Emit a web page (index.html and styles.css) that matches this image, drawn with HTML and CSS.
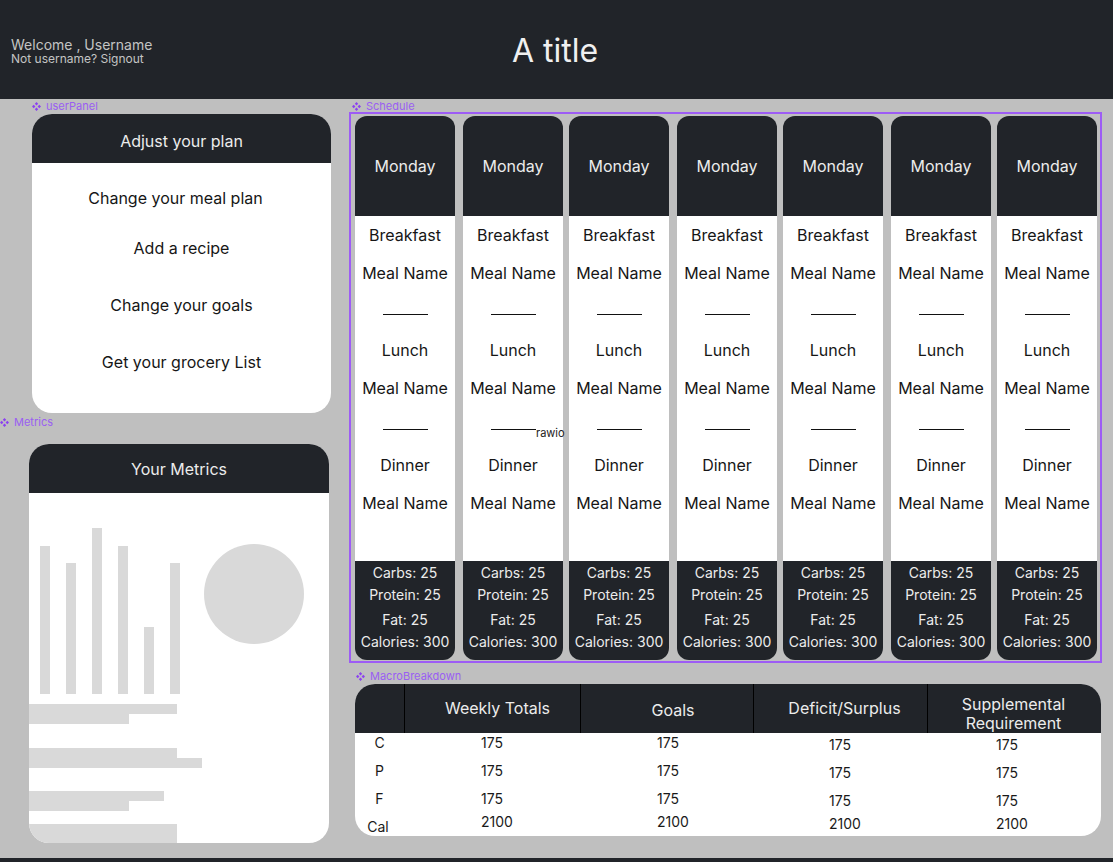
FILE: index.html
```html
<!DOCTYPE html>
<html lang="en">
<head>
<meta charset="utf-8">
<title>Meal planner</title>
<link rel="stylesheet" href="styles.css">
</head>
<body>
<header class="topbar">
  <div class="welcome">
    <div class="welcome-name">Welcome , Username</div>
    <div class="welcome-sub">Not username? Signout</div>
  </div>
  <h1 class="title">A title</h1>
  <div></div>
</header>

<main class="main">
  <section class="left">
    <div class="tag tag-user"><svg class="tag-icon" viewBox="0 0 9 9"><path d="M4.5 0L6.2 1.7L4.5 3.4L2.8 1.7Z M1.7 2.8L3.4 4.5L1.7 6.2L0 4.5Z M7.3 2.8L9 4.5L7.3 6.2L5.6 4.5Z M4.5 5.6L6.2 7.3L4.5 9L2.8 7.3Z"/></svg>userPanel</div>
    <div class="card panel">
      <div class="card-head card-head-panel">Adjust your plan</div>
      <div class="panel-body">
        <div class="panel-item panel-item-first">Change your meal plan</div>
        <div class="panel-item">Add a recipe</div>
        <div class="panel-item panel-item-gap">Change your goals</div>
        <div class="panel-item panel-item-gap">Get your grocery List</div>
      </div>
    </div>

    <div class="tag tag-metrics"><svg class="tag-icon" viewBox="0 0 9 9"><path d="M4.5 0L6.2 1.7L4.5 3.4L2.8 1.7Z M1.7 2.8L3.4 4.5L1.7 6.2L0 4.5Z M7.3 2.8L9 4.5L7.3 6.2L5.6 4.5Z M4.5 5.6L6.2 7.3L4.5 9L2.8 7.3Z"/></svg>Metrics</div>
    <div class="card metrics">
      <div class="card-head">Your Metrics</div>
      <div class="metrics-body">
        <div class="chart-row">
          <div class="vbars">
            <div class="vbar" style="height:148px"></div>
            <div class="vbar" style="height:131px"></div>
            <div class="vbar" style="height:166px"></div>
            <div class="vbar" style="height:148px"></div>
            <div class="vbar" style="height:67px"></div>
            <div class="vbar" style="height:131px"></div>
          </div>
          <div class="pie"></div>
        </div>
        <div class="hgroup hgroup-1">
          <div class="hbar" style="width:148px"></div>
          <div class="hbar" style="width:100px"></div>
        </div>
        <div class="hgroup hgroup-2">
          <div class="hbar" style="width:148px"></div>
          <div class="hbar" style="width:173px"></div>
        </div>
        <div class="hgroup hgroup-3">
          <div class="hbar" style="width:135px"></div>
          <div class="hbar" style="width:100px"></div>
        </div>
        <div class="hgroup hgroup-4">
          <div class="hbar hbar-tall" style="width:148px"></div>
        </div>
      </div>
    </div>
  </section>

  <section class="right">
    <div class="tag tag-schedule"><svg class="tag-icon" viewBox="0 0 9 9"><path d="M4.5 0L6.2 1.7L4.5 3.4L2.8 1.7Z M1.7 2.8L3.4 4.5L1.7 6.2L0 4.5Z M7.3 2.8L9 4.5L7.3 6.2L5.6 4.5Z M4.5 5.6L6.2 7.3L4.5 9L2.8 7.3Z"/></svg>Schedule</div>
    <div class="schedule">
      <div class="day">
        <div class="day-head">Monday</div>
        <div class="day-body">
          <div class="slot">Breakfast</div><div class="meal">Meal Name</div><div class="rule"></div>
          <div class="slot slot-gap">Lunch</div><div class="meal">Meal Name</div><div class="rule"></div>
          <div class="slot slot-gap">Dinner</div><div class="meal">Meal Name</div>
        </div>
        <div class="day-foot"><div>Carbs: 25</div><div>Protein: 25</div><div class="fat">Fat: 25</div><div>Calories: 300</div></div>
      </div>
      <div class="day">
        <div class="day-head">Monday</div>
        <div class="day-body">
          <div class="slot">Breakfast</div><div class="meal">Meal Name</div><div class="rule"></div>
          <div class="slot slot-gap">Lunch</div><div class="meal">Meal Name</div><div class="rule"></div>
          <div class="slot slot-gap">Dinner</div><div class="meal">Meal Name</div>
          <span class="stray">rawio</span>
        </div>
        <div class="day-foot"><div>Carbs: 25</div><div>Protein: 25</div><div class="fat">Fat: 25</div><div>Calories: 300</div></div>
      </div>
      <div class="day">
        <div class="day-head">Monday</div>
        <div class="day-body">
          <div class="slot">Breakfast</div><div class="meal">Meal Name</div><div class="rule"></div>
          <div class="slot slot-gap">Lunch</div><div class="meal">Meal Name</div><div class="rule"></div>
          <div class="slot slot-gap">Dinner</div><div class="meal">Meal Name</div>
        </div>
        <div class="day-foot"><div>Carbs: 25</div><div>Protein: 25</div><div class="fat">Fat: 25</div><div>Calories: 300</div></div>
      </div>
      <div class="day">
        <div class="day-head">Monday</div>
        <div class="day-body">
          <div class="slot">Breakfast</div><div class="meal">Meal Name</div><div class="rule"></div>
          <div class="slot slot-gap">Lunch</div><div class="meal">Meal Name</div><div class="rule"></div>
          <div class="slot slot-gap">Dinner</div><div class="meal">Meal Name</div>
        </div>
        <div class="day-foot"><div>Carbs: 25</div><div>Protein: 25</div><div class="fat">Fat: 25</div><div>Calories: 300</div></div>
      </div>
      <div class="day">
        <div class="day-head">Monday</div>
        <div class="day-body">
          <div class="slot">Breakfast</div><div class="meal">Meal Name</div><div class="rule"></div>
          <div class="slot slot-gap">Lunch</div><div class="meal">Meal Name</div><div class="rule"></div>
          <div class="slot slot-gap">Dinner</div><div class="meal">Meal Name</div>
        </div>
        <div class="day-foot"><div>Carbs: 25</div><div>Protein: 25</div><div class="fat">Fat: 25</div><div>Calories: 300</div></div>
      </div>
      <div class="day">
        <div class="day-head">Monday</div>
        <div class="day-body">
          <div class="slot">Breakfast</div><div class="meal">Meal Name</div><div class="rule"></div>
          <div class="slot slot-gap">Lunch</div><div class="meal">Meal Name</div><div class="rule"></div>
          <div class="slot slot-gap">Dinner</div><div class="meal">Meal Name</div>
        </div>
        <div class="day-foot"><div>Carbs: 25</div><div>Protein: 25</div><div class="fat">Fat: 25</div><div>Calories: 300</div></div>
      </div>
      <div class="day">
        <div class="day-head">Monday</div>
        <div class="day-body">
          <div class="slot">Breakfast</div><div class="meal">Meal Name</div><div class="rule"></div>
          <div class="slot slot-gap">Lunch</div><div class="meal">Meal Name</div><div class="rule"></div>
          <div class="slot slot-gap">Dinner</div><div class="meal">Meal Name</div>
        </div>
        <div class="day-foot"><div>Carbs: 25</div><div>Protein: 25</div><div class="fat">Fat: 25</div><div>Calories: 300</div></div>
      </div>
    </div>

    <div class="tag tag-macro"><svg class="tag-icon" viewBox="0 0 9 9"><path d="M4.5 0L6.2 1.7L4.5 3.4L2.8 1.7Z M1.7 2.8L3.4 4.5L1.7 6.2L0 4.5Z M7.3 2.8L9 4.5L7.3 6.2L5.6 4.5Z M4.5 5.6L6.2 7.3L4.5 9L2.8 7.3Z"/></svg>MacroBreakdown</div>
    <div class="macro">
      <div class="macro-head">
        <div class="mh mh-first"></div>
        <div class="mh mh-weekly">Weekly Totals</div>
        <div class="mh mh-goals">Goals</div>
        <div class="mh mh-deficit">Deficit/Surplus</div>
        <div class="mh mh-supp">Supplemental<br>Requirement</div>
      </div>
      <div class="macro-body">
        <div class="mcol mcol-label">
          <div>C</div><div>P</div><div>F</div><div class="cal">Cal</div>
        </div>
        <div class="mcol mcol-weekly">
          <div>175</div><div>175</div><div>175</div><div class="last">2100</div>
        </div>
        <div class="mcol mcol-goals">
          <div>175</div><div>175</div><div>175</div><div class="last">2100</div>
        </div>
        <div class="mcol mcol-deficit">
          <div>175</div><div>175</div><div>175</div><div class="last">2100</div>
        </div>
        <div class="mcol mcol-supp">
          <div>175</div><div>175</div><div>175</div><div class="last">2100</div>
        </div>
      </div>
    </div>
  </section>
</main>
<footer class="bottombar"></footer>
</body>
</html>
```

FILE: styles.css
```css
* { box-sizing: border-box; }

html, body {
  margin: 0;
  padding: 0;
}

body {
  font-family: Inter, "Noto Sans", sans-serif;
  background: #bfbfbf;
  color: #1a1a1a;
  width: 1113px;
  overflow: hidden;
}

/* ---------- top bar ---------- */
.topbar {
  height: 99px;
  background: #212429;
  display: grid;
  grid-template-columns: 1fr auto 1fr;
  align-items: center;
}

.welcome {
  padding-left: 11px;
  padding-top: 3px;
  color: #c4c4c4;
}

.welcome-name {
  font-size: 14px;
  line-height: 14px;
}

.welcome-sub {
  font-size: 12px;
  line-height: 13px;
}

.title {
  margin: 0;
  padding-top: 3px;
  padding-right: 3px;
  font-size: 32px;
  font-weight: 400;
  line-height: 36px;
  color: #f0f0f0;
}

/* ---------- main ---------- */
.main {
  height: 759px;
  display: flex;
}

.left {
  width: 349px;
  flex: none;
}

.right {
  flex: 1;
}

/* component tags */
.tag {
  height: 12px;
  margin-top: 1px;
  font-size: 11px;
  line-height: 12px;
  color: #9a5ef2;
  display: flex;
  align-items: center;
  white-space: nowrap;
}

.tag-icon {
  width: 9px;
  height: 9px;
  fill: #8c42f0;
  margin-right: 5px;
  flex: none;
}

.tag-user { margin-left: 32px; }
.tag-metrics { margin-left: 0; margin-top: 3px; }
.tag-schedule { margin-left: 3px; }
.tag-macro { margin-left: 7px; margin-top: 7px; }

/* ---------- cards ---------- */
.card {
  background: #fff;
  border-radius: 20px;
  overflow: hidden;
}

.card-head {
  height: 49px;
  background: #212429;
  color: #ececec;
  font-size: 16px;
  display: flex;
  align-items: center;
  justify-content: center;
}

.card-head-panel { padding-top: 4px; }

.panel {
  margin-left: 32px;
  margin-top: 2px;
  width: 299px;
  height: 299px;
}

.panel-body {
  padding-top: 25px;
  text-align: center;
  font-size: 16px;
  color: #161616;
}

.panel-item {
  line-height: 20px;
  margin-top: 30px;
}

.panel-item-first {
  margin-top: 0;
  padding-right: 12px;
}

.panel-item-gap { margin-top: 37px; }

/* metrics */
.metrics {
  margin-left: 29px;
  margin-top: 16px;
  width: 300px;
  height: 399px;
}

.metrics-body {
  height: 350px;
  padding-top: 35px;
}

.chart-row {
  display: flex;
  align-items: flex-start;
  height: 166px;
}

.vbars {
  display: flex;
  align-items: flex-end;
  gap: 16px;
  height: 166px;
  margin-left: 11px;
}

.vbar {
  width: 10px;
  background: #d9d9d9;
}

.pie {
  width: 100px;
  height: 100px;
  border-radius: 50%;
  background: #d9d9d9;
  margin-left: 24px;
  margin-top: 16px;
}

.hgroup { display: flex; flex-direction: column; }
.hgroup-1 { margin-top: 10px; }
.hgroup-2 { margin-top: 24px; }
.hgroup-3 { margin-top: 23px; }
.hgroup-4 { margin-top: 13px; }

.hbar {
  height: 10px;
  background: #d9d9d9;
}

.hbar-tall { height: 20px; }

/* ---------- schedule ---------- */
.schedule {
  width: 753px;
  border: 2px solid #9d5cf5;
  padding: 2px 3px 1px 4px;
  display: grid;
  grid-template-columns: repeat(7, 100px);
  column-gap: 7px;
}

.day {
  height: 544px;
  display: flex;
  flex-direction: column;
  text-align: center;
}

.day:nth-child(even) {
  margin-left: 1px;
  margin-right: -1px;
}

.day-head {
  height: 100px;
  background: #212429;
  color: #ececec;
  border-radius: 12px 12px 0 0;
  font-size: 16px;
  display: flex;
  align-items: center;
  justify-content: center;
}

.day-body {
  height: 345px;
  background: #fff;
  padding-top: 7px;
  font-size: 16px;
  color: #161616;
  position: relative;
}

.slot, .meal {
  line-height: 24px;
  white-space: nowrap;
}

.meal { margin-top: 14px; }
.slot-gap { margin-top: 23px; }

.rule {
  width: 45px;
  height: 1px;
  background: #111;
  margin: 29px auto 0;
}

.stray {
  position: absolute;
  left: 73px;
  top: 211px;
  font-size: 11px;
  line-height: 13px;
  color: #222;
}

.day-foot {
  height: 99px;
  background: #212429;
  color: #ececec;
  border-radius: 0 0 12px 12px;
  font-size: 14px;
  line-height: 22px;
  padding-top: 1px;
  white-space: nowrap;
}

.fat { margin-top: 3px; }

/* ---------- macro table ---------- */
.macro {
  margin-left: 6px;
  margin-top: 2px;
  width: 746px;
  height: 152px;
  background: #fff;
  border-radius: 20px;
  overflow: hidden;
}

.macro-head {
  height: 49px;
  background: #212429;
  color: #ececec;
  display: grid;
  grid-template-columns: 49px 176px 173px 174px 174px;
  font-size: 16px;
}

.mh {
  display: flex;
  align-items: center;
  justify-content: center;
  text-align: center;
  border-left: 1px solid #000;
  line-height: 19px;
}

.mh-first { border-left: none; }
.mh-weekly { padding-left: 10px; }
.mh-goals { padding-top: 3px; padding-left: 12px; }
.mh-deficit { padding-left: 8px; }
.mh-supp { padding-top: 10px; padding-right: 2px; }

.macro-body {
  display: grid;
  grid-template-columns: 49px 176px 173px 174px 174px;
  font-size: 14px;
  color: #1a1a1a;
}

.mcol div {
  line-height: 20px;
  margin-bottom: 8px;
}

.mcol div.last { margin-top: -5px; }

.mcol-label { text-align: center; }
.mcol-label .cal { padding-right: 3px; }

.mcol-weekly { padding-left: 77px; }
.mcol-goals { padding-left: 77px; }
.mcol-deficit { padding-left: 76px; padding-top: 2px; }
.mcol-supp { padding-left: 69px; padding-top: 2px; }

/* ---------- bottom ---------- */
.bottombar {
  height: 4px;
  background: #212429;
}
```
